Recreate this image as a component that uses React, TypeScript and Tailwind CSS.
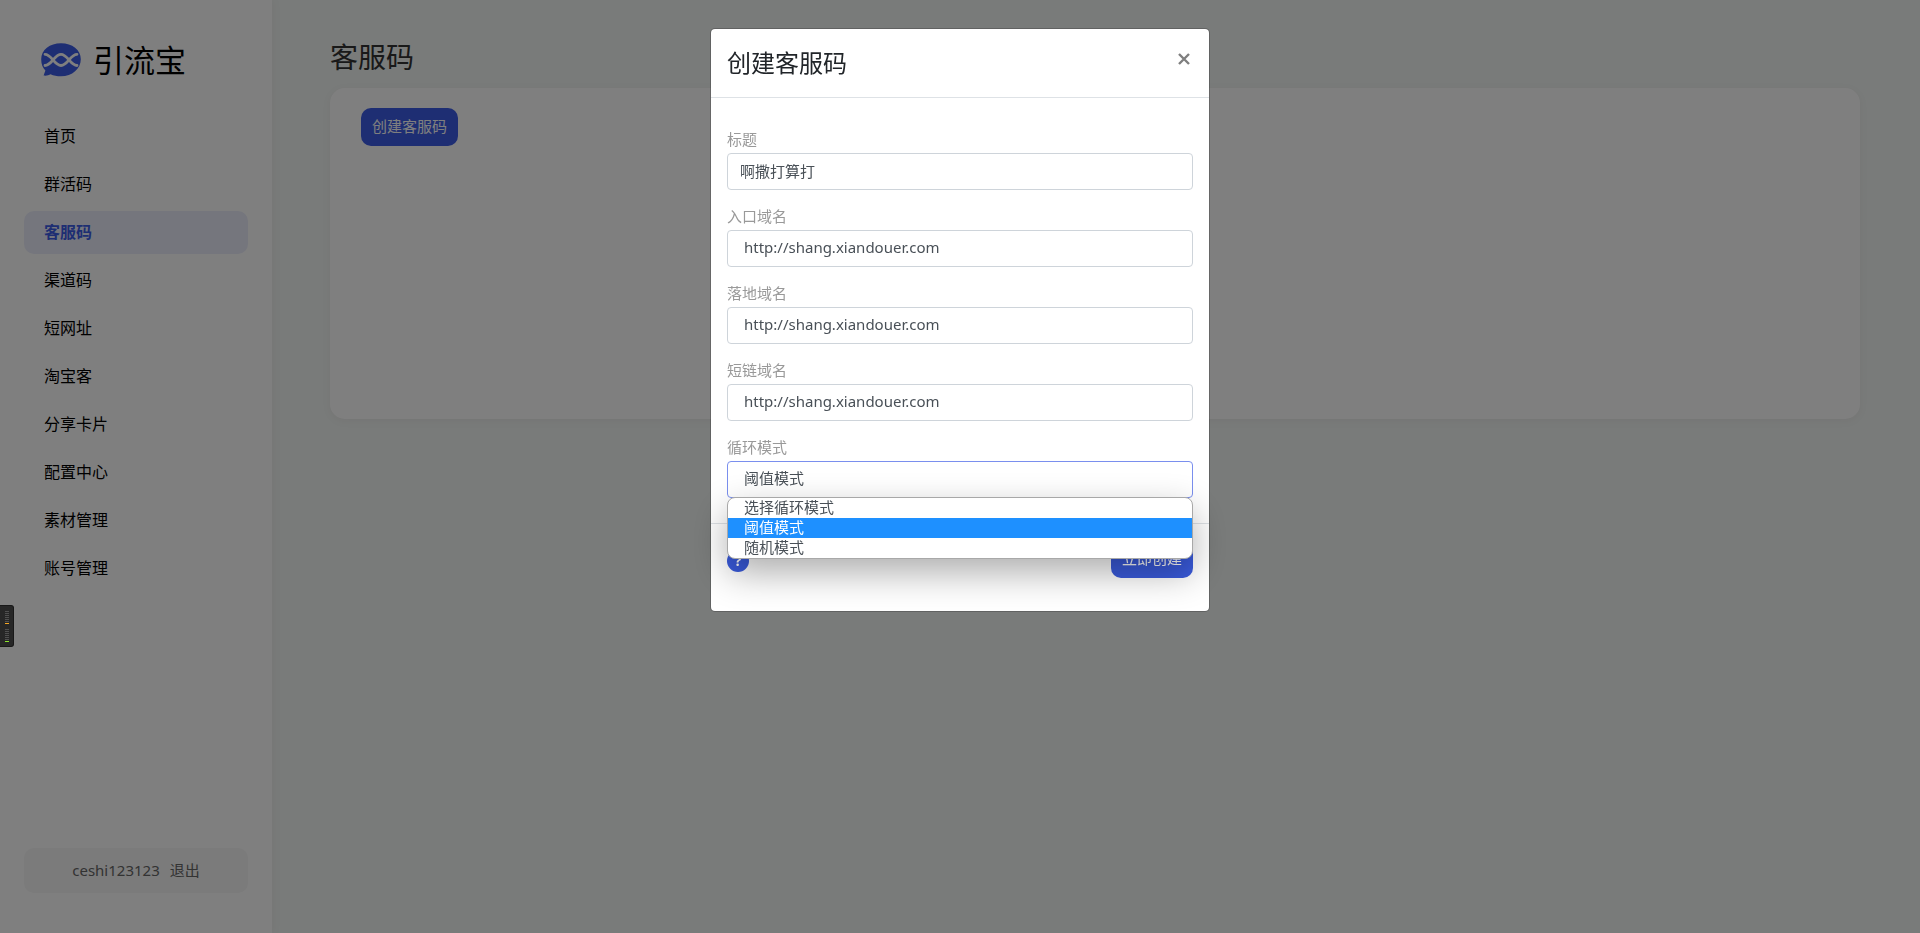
import { useState } from "react";

const navItems = [
  "首页",
  "群活码",
  "客服码",
  "渠道码",
  "短网址",
  "淘宝客",
  "分享卡片",
  "配置中心",
  "素材管理",
  "账号管理",
];

const domain = "http://shang.xiandouer.com";
const domainFields = [
  { id: "entry", label: "入口域名" },
  { id: "landing", label: "落地域名" },
  { id: "short", label: "短链域名" },
];
const modes = ["选择循环模式", "阈值模式", "随机模式"];

const labelClass = "block h-[26px] text-[15px] leading-6 text-[#999999]";
const fieldClass =
  "block h-[37px] w-full appearance-none rounded border bg-white pb-[3px] text-[15px] text-[#495057] outline-none";

function Logo() {
  return (
    <svg className="h-[34px] w-10" viewBox="0 0 40 34" fill="none" aria-hidden="true">
      <path
        d="M20 .3C8.800 .3 .2 7 .2 16.300c0 4.800 1.500 8.500 4.200 11.300L2.600 32.600c3 .4 5-.3 7-1.300 3 1.400 6.400 2 10.400 2 11.200 0 19.800-7.400 19.800-17S31.200.3 20 .3z"
        fill="#3c5ce6"
      />
      <g stroke="#fff" strokeWidth="2.800" strokeLinecap="round" strokeLinejoin="round">
        <path d="M4 11.300c3.500 0 5.500 2.700 8 5.700s4.500 5.500 8 5.500 5.500-2.500 8-5.500 4.500-5.700 8-5.700" />
        <path d="M4 22.500c3.500 0 5.500-2.600 8-5.500s4.500-5.700 8-5.700 5.500 2.700 8 5.700 4.500 5.500 8 5.500" />
      </g>
    </svg>
  );
}

function Meter({ active }: { active: string }) {
  return (
    <div className="flex flex-col gap-px">
      {[0, 1, 2, 3, 4, 5].map((i) => (
        <span key={i} className="h-px w-1 bg-[#505050]" />
      ))}
      <span className={"h-px w-1 " + active} />
    </div>
  );
}

function Sidebar() {
  return (
    <aside className="flex w-[272px] shrink-0 flex-col bg-white px-6 pt-10 pb-10 shadow-[0_0_10px_rgba(90,0,30,0.06)]">
      <div className="flex h-[39px] items-center gap-3 pl-[17px]">
        <Logo />
        <span className="text-[31px] leading-[38px] text-black">引流宝</span>
      </div>
      <nav className="mt-9 flex flex-col gap-[5px]">
        {navItems.map((item) => (
          <a
            key={item}
            href="#"
            className={
              item === "客服码"
                ? "flex h-[43px] items-center rounded-[10px] bg-[#ebedfb] pb-0.5 pl-5 text-base font-bold text-[#3c5ce6]"
                : "flex h-[43px] items-center rounded-[10px] pb-0.5 pl-5 text-base text-black"
            }
          >
            {item}
          </a>
        ))}
      </nav>
      <div className="mt-auto flex h-[45px] items-center justify-center gap-2.5 rounded-[10px] bg-[#f6f6f6] text-[15px] text-[#666666]">
        <span>ceshi123123</span>
        <a href="#">退出</a>
      </div>
    </aside>
  );
}

function CreateDialog() {
  const [title, setTitle] = useState("啊撒打算打");
  const [mode, setMode] = useState("阈值模式");
  return (
    <div
      role="dialog"
      aria-modal="true"
      aria-labelledby="dialog-title"
      className="w-[500px] rounded-[5px] border border-black/20 bg-white bg-clip-padding"
    >
      <header className="flex h-[69px] items-start justify-between border-b border-[#dee2e6] px-4">
        <h2 id="dialog-title" className="pt-4 text-2xl leading-9 text-[#212529]">
          创建客服码
        </h2>
        <button type="button" aria-label="关闭" className="mt-6 mr-[3px] text-[#7f7f7f]">
          <svg className="size-3" viewBox="0 0 12 12" fill="none" stroke="currentColor" strokeWidth="2.400" aria-hidden="true">
            <path d="M1 1l10 10M11 1L1 11" />
          </svg>
        </button>
      </header>
      <form>
        <div className="flex flex-col gap-3.5 px-4 pt-[29px] pb-[25px]">
          <div>
            <label htmlFor="title" className={labelClass}>标题</label>
            <input
              id="title"
              value={title}
              onChange={(e) => setTitle(e.target.value)}
              className={fieldClass + " border-[#ced4da] px-3"}
            />
          </div>
          {domainFields.map((f) => (
            <div key={f.id}>
              <label htmlFor={f.id} className={labelClass}>{f.label}</label>
              <select id={f.id} className={fieldClass + " border-[#ced4da] px-4"}>
                <option>{domain}</option>
              </select>
            </div>
          ))}
          <div className="relative">
            <label htmlFor="mode" className={labelClass}>循环模式</label>
            <select
              id="mode"
              value={mode}
              onChange={(e) => setMode(e.target.value)}
              className={fieldClass + " border-[#7a8fee] px-4"}
            >
              {modes.map((m) => (
                <option key={m}>{m}</option>
              ))}
            </select>
            <ul className="absolute inset-x-0 top-full z-10 -mt-px overflow-hidden rounded-lg border border-[#a8a8a8] bg-white text-[15px] leading-5 shadow-[0_14px_36px_rgba(0,0,0,0.32)]">
              {modes.map((m) => (
                <li
                  key={m}
                  onClick={() => setMode(m)}
                  className={m === mode ? "h-5 bg-[#1e90ff] px-4 leading-[18px] text-white" : "h-5 px-4 leading-[18px] text-[#495057]"}
                >
                  {m}
                </li>
              ))}
            </ul>
          </div>
        </div>
        <footer className="flex h-[88px] items-start justify-between border-t border-[#dee2e6] px-4 pt-4">
          <button
            type="button"
            aria-label="帮助"
            className="mt-[10px] size-[22px] rounded-full bg-[#3a5bdc] text-sm leading-[22px] font-bold text-white"
          >
            ?
          </button>
          <button type="button" className="h-[38px] rounded-[10px] bg-[#3a5bdc] px-[11px] pb-0.5 text-[15px] text-white">
            立即创建
          </button>
        </footer>
      </form>
    </div>
  );
}

export default function App() {
  return (
    <div className="flex min-h-screen bg-[#f2f6f4] font-['Noto_Sans','Noto_Sans_CJK_SC',sans-serif]">
      <Sidebar />
      <main className="flex-1 pt-9 pr-[60px] pl-[58px]">
        <h1 className="h-[52px] text-[28px] leading-[42px] text-[#333333]">客服码</h1>
        <section className="h-[331px] rounded-[15px] bg-white px-[31px] py-5 shadow-[0_2px_10px_rgba(90,0,30,0.05)]">
          <button type="button" className="h-[38px] rounded-[10px] bg-[#3c5ce6] px-[11px] pb-0.5 text-[15px] text-white">
            创建客服码
          </button>
        </section>
      </main>
      <div className="fixed inset-0 flex items-start justify-center overflow-auto bg-black/50 pt-7">
        <CreateDialog />
      </div>
      <div className="fixed top-[605px] left-0 flex h-[42px] w-3.5 flex-col items-center gap-[5px] rounded-r-[3px] border border-l-0 border-[#181818] bg-[#272727] pt-[5px]">
        <Meter active="bg-[#f5a623]" />
        <Meter active="bg-[#8be32c]" />
      </div>
    </div>
  );
}
